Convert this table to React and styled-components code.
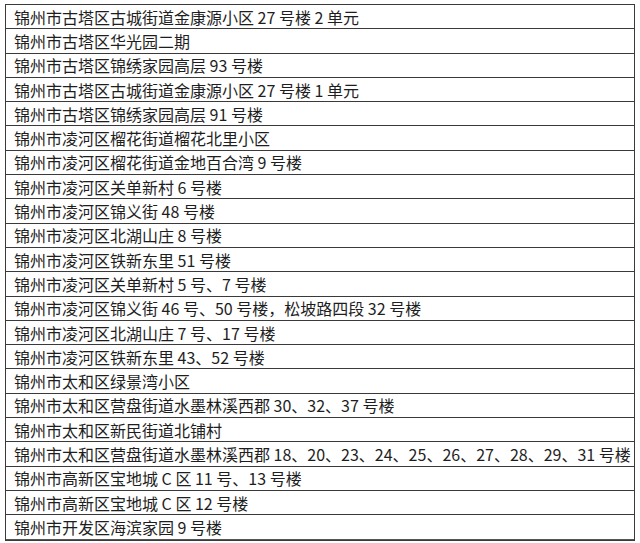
import React from 'react'
import styled, {createGlobalStyle} from 'styled-components'

const GlobalStyle = createGlobalStyle`
  html, body {
    margin: 0;
    padding: 0;
    background: #ffffff;
  }
`

const Page = styled.div`
  width: 640px;
  height: 543px;
  padding: 4px 5px 0 5px;
  box-sizing: border-box;
  background: #ffffff;
`

const Table = styled.div`
  display: flex;
  flex-direction: column;
  width: 630px;
  border: 1.5px solid #3a3a3a;
  border-bottom-width: 1px;
  box-sizing: border-box;
`

const Row = styled.div`
  display: flex;
  align-items: center;
  height: 24.3px;
  box-sizing: border-box;
  padding-left: 8px;
  border-bottom: 1.5px solid #3a3a3a;
  font-family: "Noto Sans CJK SC", "Noto Sans", sans-serif;
  font-size: 16px;
  color: #1e1e1e;
  white-space: nowrap;
  overflow: hidden;

  &:last-child {
    border-bottom: 1.5px solid #555;
  }
`

const ROWS = [
  '锦州市古塔区古城街道金康源小区 27 号楼 2 单元',
  '锦州市古塔区华光园二期',
  '锦州市古塔区锦绣家园高层 93 号楼',
  '锦州市古塔区古城街道金康源小区 27 号楼 1 单元',
  '锦州市古塔区锦绣家园高层 91 号楼',
  '锦州市凌河区榴花街道榴花北里小区',
  '锦州市凌河区榴花街道金地百合湾 9 号楼',
  '锦州市凌河区关单新村 6 号楼',
  '锦州市凌河区锦义街 48 号楼',
  '锦州市凌河区北湖山庄 8 号楼',
  '锦州市凌河区铁新东里 51 号楼',
  '锦州市凌河区关单新村 5 号、7 号楼',
  '锦州市凌河区锦义街 46 号、50 号楼，松坡路四段 32 号楼',
  '锦州市凌河区北湖山庄 7 号、17 号楼',
  '锦州市凌河区铁新东里 43、52 号楼',
  '锦州市太和区绿景湾小区',
  '锦州市太和区营盘街道水墨林溪西郡 30、32、37 号楼',
  '锦州市太和区新民街道北铺村',
  '锦州市太和区营盘街道水墨林溪西郡 18、20、23、24、25、26、27、28、29、31 号楼',
  '锦州市高新区宝地城 C 区 11 号、13 号楼',
  '锦州市高新区宝地城 C 区 12 号楼',
  '锦州市开发区海滨家园 9 号楼',
]

export default function App() {
  return (
    <Page>
      <GlobalStyle />
      <Table>
        {ROWS.map((text, i) => (
          <Row key={`row-${i}`}>{text}</Row>
        ))}
      </Table>
    </Page>
  )
}
